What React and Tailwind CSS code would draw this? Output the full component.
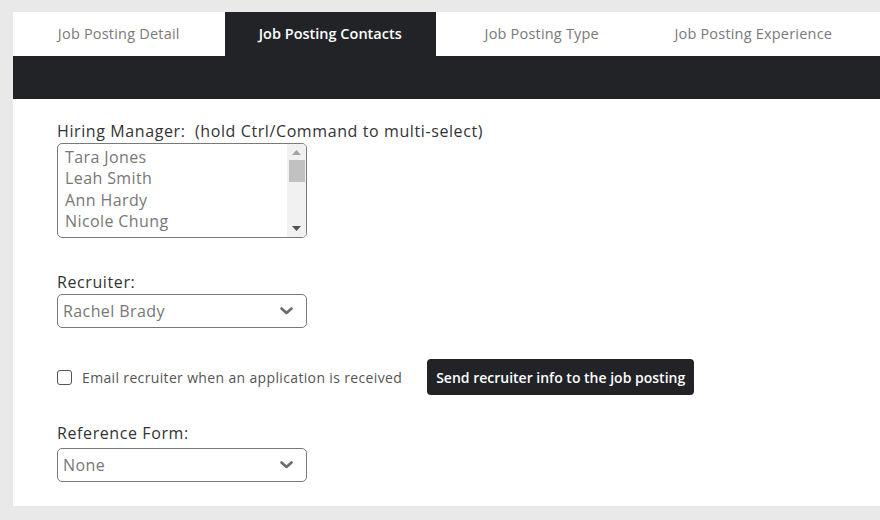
const tabs = [
  "Job Posting Detail",
  "Job Posting Contacts",
  "Job Posting Type",
  "Job Posting Experience",
];

const managers = ["Tara Jones", "Leah Smith", "Ann Hardy", "Nicole Chung"];

function Chevron() {
  return (
    <svg width="13" height="8" viewBox="0 0 13 8" className="shrink-0">
      <path d="M1.5 1.5 L6.5 6 L11.5 1.5" fill="none" stroke="#6b6b6b" strokeWidth="2.6" strokeLinecap="round" strokeLinejoin="round" />
    </svg>
  );
}

function Select({ value }) {
  return (
    <div className="flex h-[34px] w-[250px] items-center justify-between rounded-[5px] border border-[#7a7a7a] bg-white pl-[5px] pr-[13px]">
      <span className="text-[16px] tracking-[0.4px] text-[#777]">{value}</span>
      <Chevron />
    </div>
  );
}

function ListBox() {
  return (
    <div className="flex h-[95px] w-[250px] overflow-hidden rounded-[5px] border border-[#7a7a7a] bg-white">
      <div className="flex-1 pl-[7px] pt-[3px]">
        {managers.map((m) => (
          <div key={m} className="h-[21.3px] text-[16px] leading-[21px] tracking-[0.4px] text-[#777]">
            {m}
          </div>
        ))}
      </div>
      <div className="flex w-[19px] flex-col items-center bg-[#f1f1f1] pt-[6px] pb-[6px]">
        <svg width="9" height="5" viewBox="0 0 9 5">
          <path d="M0 5 L4.5 0 L9 5 Z" fill="#a3a3a3" />
        </svg>
        <div className="mt-[5px] h-[22px] w-[16px] bg-[#c1c1c1]" />
        <div className="flex-1" />
        <svg width="9" height="5" viewBox="0 0 9 5">
          <path d="M0 0 L9 0 L4.5 5 Z" fill="#505050" />
        </svg>
      </div>
    </div>
  );
}

export default function App() {
  return (
    <div
      className="h-[520px] w-[880px] overflow-hidden bg-[#e9e9e9] pl-[13px] pt-[12px]"
      style={{ fontFamily: '"Open Sans", "Noto Sans", sans-serif' }}
    >
      <div className="h-[494px] w-[867px] bg-white">
        <div className="flex h-[44px]">
          {tabs.map((t, i) => (
            <div
              key={t}
              className={
                i === 1
                  ? "flex w-[211.5px] items-center justify-center bg-[#212327] text-[14.5px] font-semibold text-white"
                  : "flex w-[211.5px] items-center justify-center text-[14.5px] tracking-[0.2px] text-[#7a7a7a]"
              }
            >
              {t}
            </div>
          ))}
        </div>
        <div className="h-[43px] bg-[#212327]" />

        <div className="pl-[44px] pt-[21px]">
          <div className="text-[16px] leading-[22px] tracking-[0.6px] text-[#333]">
            Hiring Manager:&nbsp; (hold Ctrl/Command to multi-select)
          </div>
          <div className="mt-[1px]">
            <ListBox />
          </div>

          <div className="mt-[33px] text-[16px] leading-[22px] tracking-[0.6px] text-[#333]">Recruiter:</div>
          <div className="mt-[1px]">
            <Select value="Rachel Brady" />
          </div>

          <div className="mt-[31px] flex items-center">
            <div className="h-[15px] w-[15px] rounded-[3px] border border-[#555] bg-white" />
            <span className="ml-[10px] text-[14px] tracking-[0.35px] text-[#555]">
              Email recruiter when an application is received
            </span>
            <button className="ml-[25px] h-[36px] rounded-[4px] bg-[#212327] px-[9px] text-[14px] font-semibold text-white">
              Send recruiter info to the job posting
            </button>
          </div>

          <div className="mt-[27px] text-[16px] leading-[22px] tracking-[0.6px] text-[#333]">Reference Form:</div>
          <div className="mt-[4px]">
            <Select value="None" />
          </div>
        </div>
      </div>
    </div>
  );
}
